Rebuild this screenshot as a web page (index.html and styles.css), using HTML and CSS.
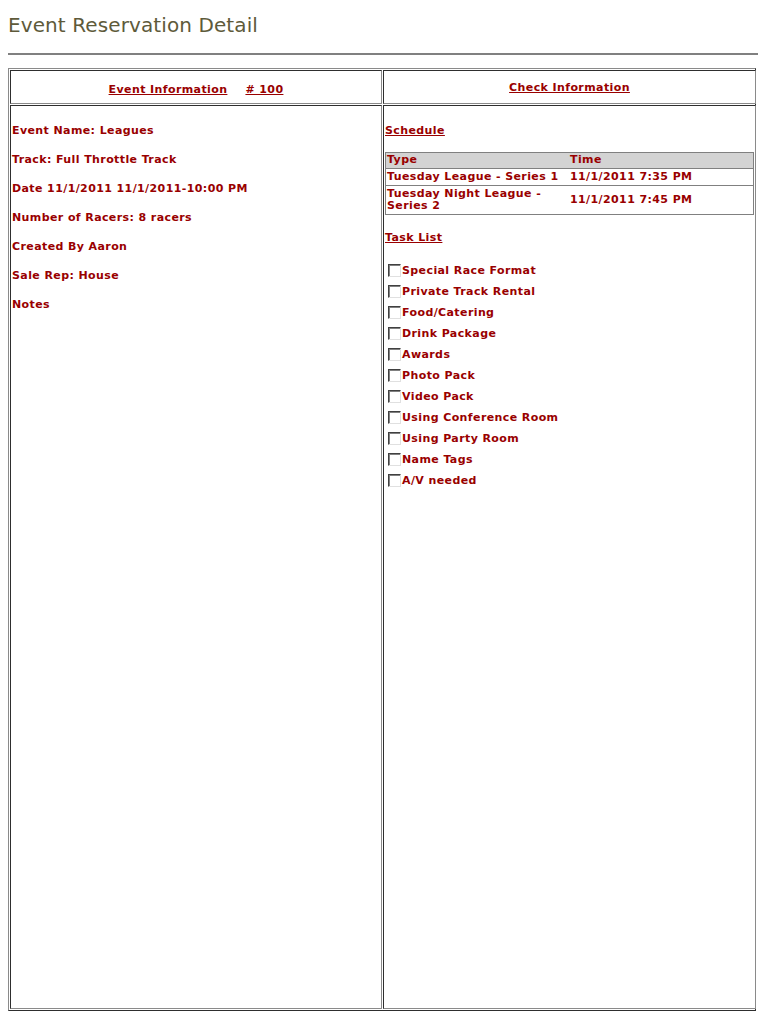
FILE: index.html
```html
<!DOCTYPE html>
<html>
<head>
<meta charset="utf-8">
<title>Event Reservation Detail</title>
<link rel="stylesheet" href="styles.css">
</head>
<body>
<div class="page">
  <h1 class="title">Event Reservation Detail</h1>
  <hr class="rule">
  <div class="frame">
    <div class="cell head head-left">
      <a href="#" class="link">Event Information</a><a href="#" class="link num"># 100</a>
    </div>
    <div class="cell head">
      <a href="#" class="link">Check Information</a>
    </div>
    <div class="cell body">
      <div class="info">Event Name: Leagues</div>
      <div class="info">Track: Full Throttle Track</div>
      <div class="info">Date 11/1/2011 11/1/2011-10:00 PM</div>
      <div class="info">Number of Racers: 8 racers</div>
      <div class="info">Created By Aaron</div>
      <div class="info">Sale Rep: House</div>
      <div class="info">Notes</div>
    </div>
    <div class="cell body">
      <a href="#" class="link section">Schedule</a>
      <table class="sched">
        <tr class="sched-head"><th class="c-type">Type</th><th>Time</th></tr>
        <tr><td>Tuesday League - Series 1</td><td>11/1/2011 7:35 PM</td></tr>
        <tr><td>Tuesday Night League - Series 2</td><td>11/1/2011 7:45 PM</td></tr>
      </table>
      <a href="#" class="link section tasks-title">Task List</a>
      <ul class="tasks">
        <li><label><input type="checkbox" class="cb">Special Race Format</label></li>
        <li><label><input type="checkbox" class="cb">Private Track Rental</label></li>
        <li><label><input type="checkbox" class="cb">Food/Catering</label></li>
        <li><label><input type="checkbox" class="cb">Drink Package</label></li>
        <li><label><input type="checkbox" class="cb">Awards</label></li>
        <li><label><input type="checkbox" class="cb">Photo Pack</label></li>
        <li><label><input type="checkbox" class="cb">Video Pack</label></li>
        <li><label><input type="checkbox" class="cb">Using Conference Room</label></li>
        <li><label><input type="checkbox" class="cb">Using Party Room</label></li>
        <li><label><input type="checkbox" class="cb">Name Tags</label></li>
        <li><label><input type="checkbox" class="cb">A/V needed</label></li>
      </ul>
    </div>
  </div>
</div>
</body>
</html>
```

FILE: styles.css
```css
html, body {
  margin: 0;
  padding: 0;
  background: #ffffff;
}
body {
  font-family: "DejaVu Sans", Verdana, sans-serif;
  font-size: 11px;
  letter-spacing: 0.4px;
  color: #990000;
}
.page {
  padding: 0 0 8px 8px;
  width: 750px;
}
.title {
  margin: 0;
  padding-top: 13px;
  height: 24px;
  line-height: 24px;
  font-size: 20px;
  letter-spacing: 0.1px;
  font-weight: normal;
  color: #5e5a3a;
}
.rule {
  margin: 16px 0 0 0;
  border: 0;
  height: 2px;
  background: #808080;
}
.frame {
  margin-top: 13px;
  display: grid;
  grid-template-columns: 372px 373px;
  grid-template-rows: 34px 904px;
  gap: 1px;
  padding: 1px;
  border: 1px solid;
  border-color: #8a8a8a #2e2e2e #2e2e2e #8a8a8a;
  width: 748px;
  box-sizing: border-box;
}
.cell {
  border: 1px solid;
  border-color: #2e2e2e #8a8a8a #8a8a8a #2e2e2e;
  box-sizing: border-box;
  font-weight: bold;
}
.head {
  display: flex;
  align-items: center;
  justify-content: center;
  line-height: 13px;
}
.head-left {
  padding-top: 4px;
}
.link {
  color: #990000;
  text-decoration: underline;
  font-weight: bold;
}
.num {
  margin-left: 18px;
}
.body {
  padding: 18px 1px 1px 1px;
  line-height: 13px;
}
.info {
  margin-bottom: 16px;
}
.section {
  display: block;
  width: max-content;
}
.sched {
  margin-top: 15px;
  width: 100%;
  border-collapse: collapse;
  border: 1px solid #808080;
  font-size: 11px;
  line-height: 12px;
  color: #990000;
}
.sched th, .sched td {
  text-align: left;
  padding: 2px 1px 2px 1px;
  border-top: 1px solid #808080;
  font-weight: bold;
  vertical-align: middle;
}
.sched-head th {
  padding: 1px 1px 2px 1px;
}
.sched-head {
  background: #d3d3d3;
}
.c-type {
  width: 181px;
}
.tasks-title {
  margin-top: 16px;
}
.tasks {
  list-style: none;
  margin: 20px 0 0 0;
  padding: 0;
}
.tasks li {
  height: 21px;
  line-height: 13px;
}
.tasks label {
  display: flex;
  align-items: center;
}
.cb {
  appearance: none;
  -webkit-appearance: none;
  width: 13px;
  height: 13px;
  margin: 0 1px 0 3px;
  border: 1px solid;
  border-color: #404040 #e0e0e0 #e0e0e0 #404040;
  box-shadow: inset 1px 1px 0 #808080;
  background: #ffffff;
  flex: none;
}
```
